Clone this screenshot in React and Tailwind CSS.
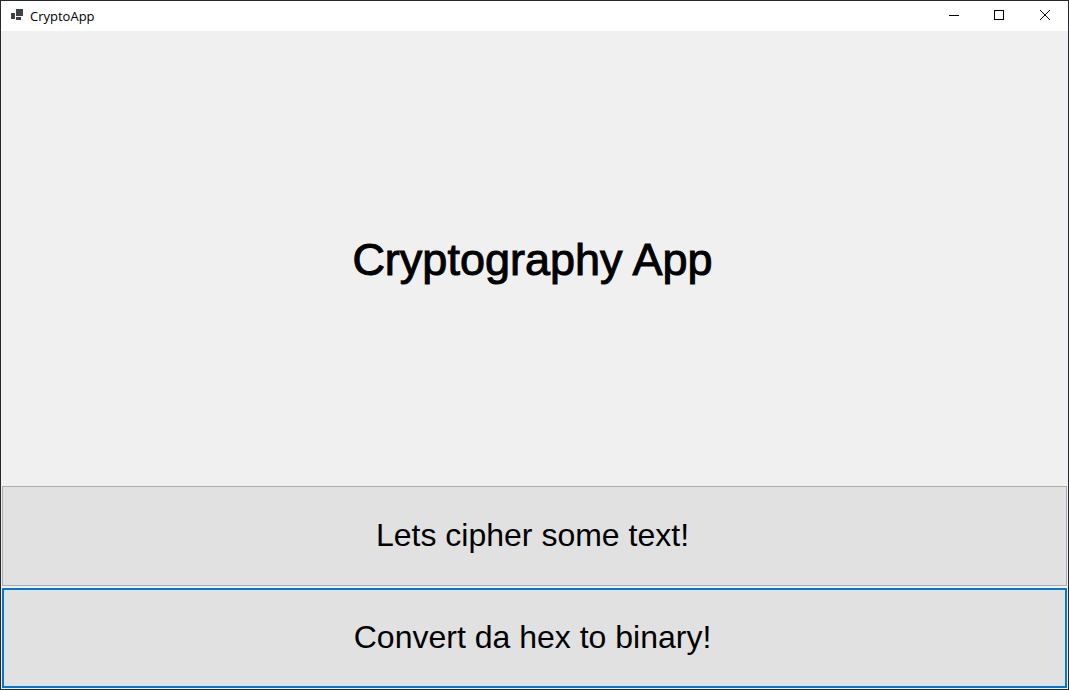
const appFont = "font-['Liberation_Sans',Arial,sans-serif]";

function AppIcon() {
  return (
    <svg width="13" height="14" viewBox="0 0 13 14" fill="#414141" shapeRendering="crispEdges" aria-hidden="true">
      <rect x="0" y="4" width="4" height="6" />
      <rect x="5" y="0" width="7" height="7" />
      <rect x="5" y="8" width="5" height="3" />
    </svg>
  );
}

function CaptionButton({ label, path, crisp }) {
  return (
    <button type="button" aria-label={label} className="flex h-full w-[46px] items-center justify-center hover:bg-[#e5e5e5]">
      <svg
        width="12"
        height="12"
        viewBox="0 0 12 12"
        fill="none"
        stroke="#000"
        shapeRendering={crisp ? "crispEdges" : "auto"}
        aria-hidden="true"
      >
        <path d={path} />
      </svg>
    </button>
  );
}

function TitleBar() {
  return (
    <header className="flex h-[30px] items-center justify-between bg-white">
      <div className="flex items-center gap-1.5 pl-2.5">
        <AppIcon />
        <span className="font-['Open_Sans',sans-serif] text-[13px] leading-4 text-black">CryptoApp</span>
      </div>
      <div className="flex h-full">
        <CaptionButton label="Minimize" path="M2 5.5H12" crisp />
        <CaptionButton label="Maximize" path="M1.5 0.5H10.5V9.5H1.5Z" crisp />
        <CaptionButton label="Close" path="M1 0L11 10M11 0L1 10" />
      </div>
    </header>
  );
}

export default function App() {
  return (
    <div className={`flex min-h-screen flex-col border border-[#26282b] bg-[#f0f0f0] text-black ${appFont}`}>
      <TitleBar />
      <main className="flex grow flex-col">
        <div className="flex grow items-center justify-center pt-1 pr-1">
          <h1 className="text-[45px] leading-[52px] [-webkit-text-stroke:1px_#000]">Cryptography App</h1>
        </div>
        <div className="flex flex-col gap-0.5 p-px">
          <button type="button" className="h-[100px] border border-[#adadad] bg-[#e1e1e1] pr-1 pb-0.5 text-[32px] leading-10">
            Lets cipher some text!
          </button>
          <button type="button" className="h-[100px] border-2 border-[#0078d7] bg-[#e1e1e1] pr-1 pb-0.5 text-[32px] leading-10">
            Convert da hex to binary!
          </button>
        </div>
      </main>
    </div>
  );
}
